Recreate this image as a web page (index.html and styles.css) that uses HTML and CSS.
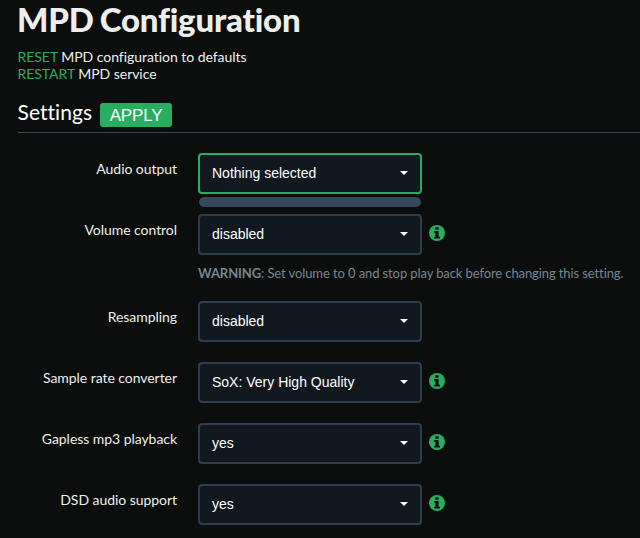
FILE: index.html
```html
<!DOCTYPE html>
<html lang="en">
<head>
<meta charset="utf-8">
<title>MPD Configuration</title>
<link rel="stylesheet" href="styles.css">
</head>
<body>
<svg class="defs" aria-hidden="true">
  <symbol id="info" viewBox="0 0 16 16">
    <circle cx="8" cy="8" r="8" fill="#27ae60"/>
    <path fill="#0b0e0d" d="M6.3 2.3h3.3v2.4H6.3zM5.2 6h4.4v5.7H11v1.8H5.2v-1.8h1.3V7.8H5.2z"/>
  </symbol>
</svg>
<main class="page">
  <h1>MPD Configuration</h1>
  <p class="actions"><a>RESET</a> MPD configuration to defaults<br><a>RESTART</a> MPD service</p>
  <h2 class="legend"><span>Settings</span><button class="apply">APPLY</button></h2>
  <form class="form">
    <div class="row">
      <label>Audio output</label>
      <div class="field">
        <div class="select active"><span>Nothing selected</span><i class="caret"></i></div>
        <div class="menu"></div>
      </div>
    </div>
    <div class="row">
      <label>Volume control</label>
      <div class="field">
        <div class="control"><div class="select"><span>disabled</span><i class="caret"></i></div><svg class="info"><use href="#info"/></svg></div>
        <p class="help"><b>WARNING</b>: Set volume to 0 and stop play back before changing this setting.</p>
      </div>
    </div>
    <div class="row">
      <label>Resampling</label>
      <div class="field"><div class="select"><span>disabled</span><i class="caret"></i></div></div>
    </div>
    <div class="row">
      <label>Sample rate converter</label>
      <div class="field control"><div class="select"><span>SoX: Very High Quality</span><i class="caret"></i></div><svg class="info"><use href="#info"/></svg></div>
    </div>
    <div class="row">
      <label>Gapless mp3 playback</label>
      <div class="field control"><div class="select"><span>yes</span><i class="caret"></i></div><svg class="info"><use href="#info"/></svg></div>
    </div>
    <div class="row">
      <label>DSD audio support</label>
      <div class="field control"><div class="select"><span>yes</span><i class="caret"></i></div><svg class="info"><use href="#info"/></svg></div>
    </div>
  </form>
</main>
</body>
</html>
```
FILE: styles.css
```css
* { box-sizing: border-box; }
body {
  margin: 0;
  height: 538px;
  overflow: hidden;
  background: #0b0e0d;
  color: #eee;
  font: 14px/17px Lato, sans-serif;
}
.defs { display: none; }
.page { padding-left: 18px; }
h1 {
  margin: 0 0 0 -1px;
  height: 48px;
  font-size: 33px;
  line-height: 39px;
  font-weight: 900;
  letter-spacing: -0.2px;
  word-spacing: -1.5px;
}
.actions { margin: 0 0 0 -0.5px; height: 34px; letter-spacing: -0.04px; }
.actions a { color: #27ae60; }
.legend {
  display: flex;
  gap: 8px;
  margin: 16px 0 20px;
  height: 35px;
  border-bottom: 1px solid #34495e;
  color: #fff;
  font-size: 21px;
  font-weight: 400;
  line-height: 28px;
}
.legend span {
  width: 74.5px;
  margin-left: -0.5px;
  letter-spacing: 0.05px;
  font-variant-ligatures: none;
}
.apply {
  width: 72px;
  height: 24px;
  margin-top: 5px;
  padding: 1px 0 0;
  border: 0;
  border-radius: 3px;
  background: #27ae60;
  color: #fff;
  font: 17px/23px "Liberation Sans", sans-serif;
  letter-spacing: -0.2px;
}
.row { display: flex; gap: 21px; margin-bottom: 20px; }
.row label {
  width: 159px;
  padding-top: 7px;
  text-align: right;
  letter-spacing: -0.05px;
}
.control { display: flex; gap: 7px; }
.select {
  display: flex;
  justify-content: space-between;
  align-items: center;
  width: 224px;
  height: 41px;
  padding: 0 12px;
  border: 2px solid #2c3e50;
  border-radius: 4px;
  background: #11181f;
  color: #fff;
  font-family: "Liberation Sans", sans-serif;
}
.select.active { border-color: #27ae60; }
.caret {
  border: 4px solid transparent;
  border-top-color: #fff;
  border-bottom: 0;
  transform: translateY(-1px);
}
.menu {
  height: 10px;
  width: 222px;
  margin: 3px 0 -13px 1px;
  border-radius: 5px;
  background: #34495e;
}
.info { width: 16px; height: 16px; margin-top: 11px; }
.help {
  margin: 10px 0 -1px;
  color: #798591;
  font-size: 13px;
  letter-spacing: -0.1px;
  white-space: nowrap;
}
```
